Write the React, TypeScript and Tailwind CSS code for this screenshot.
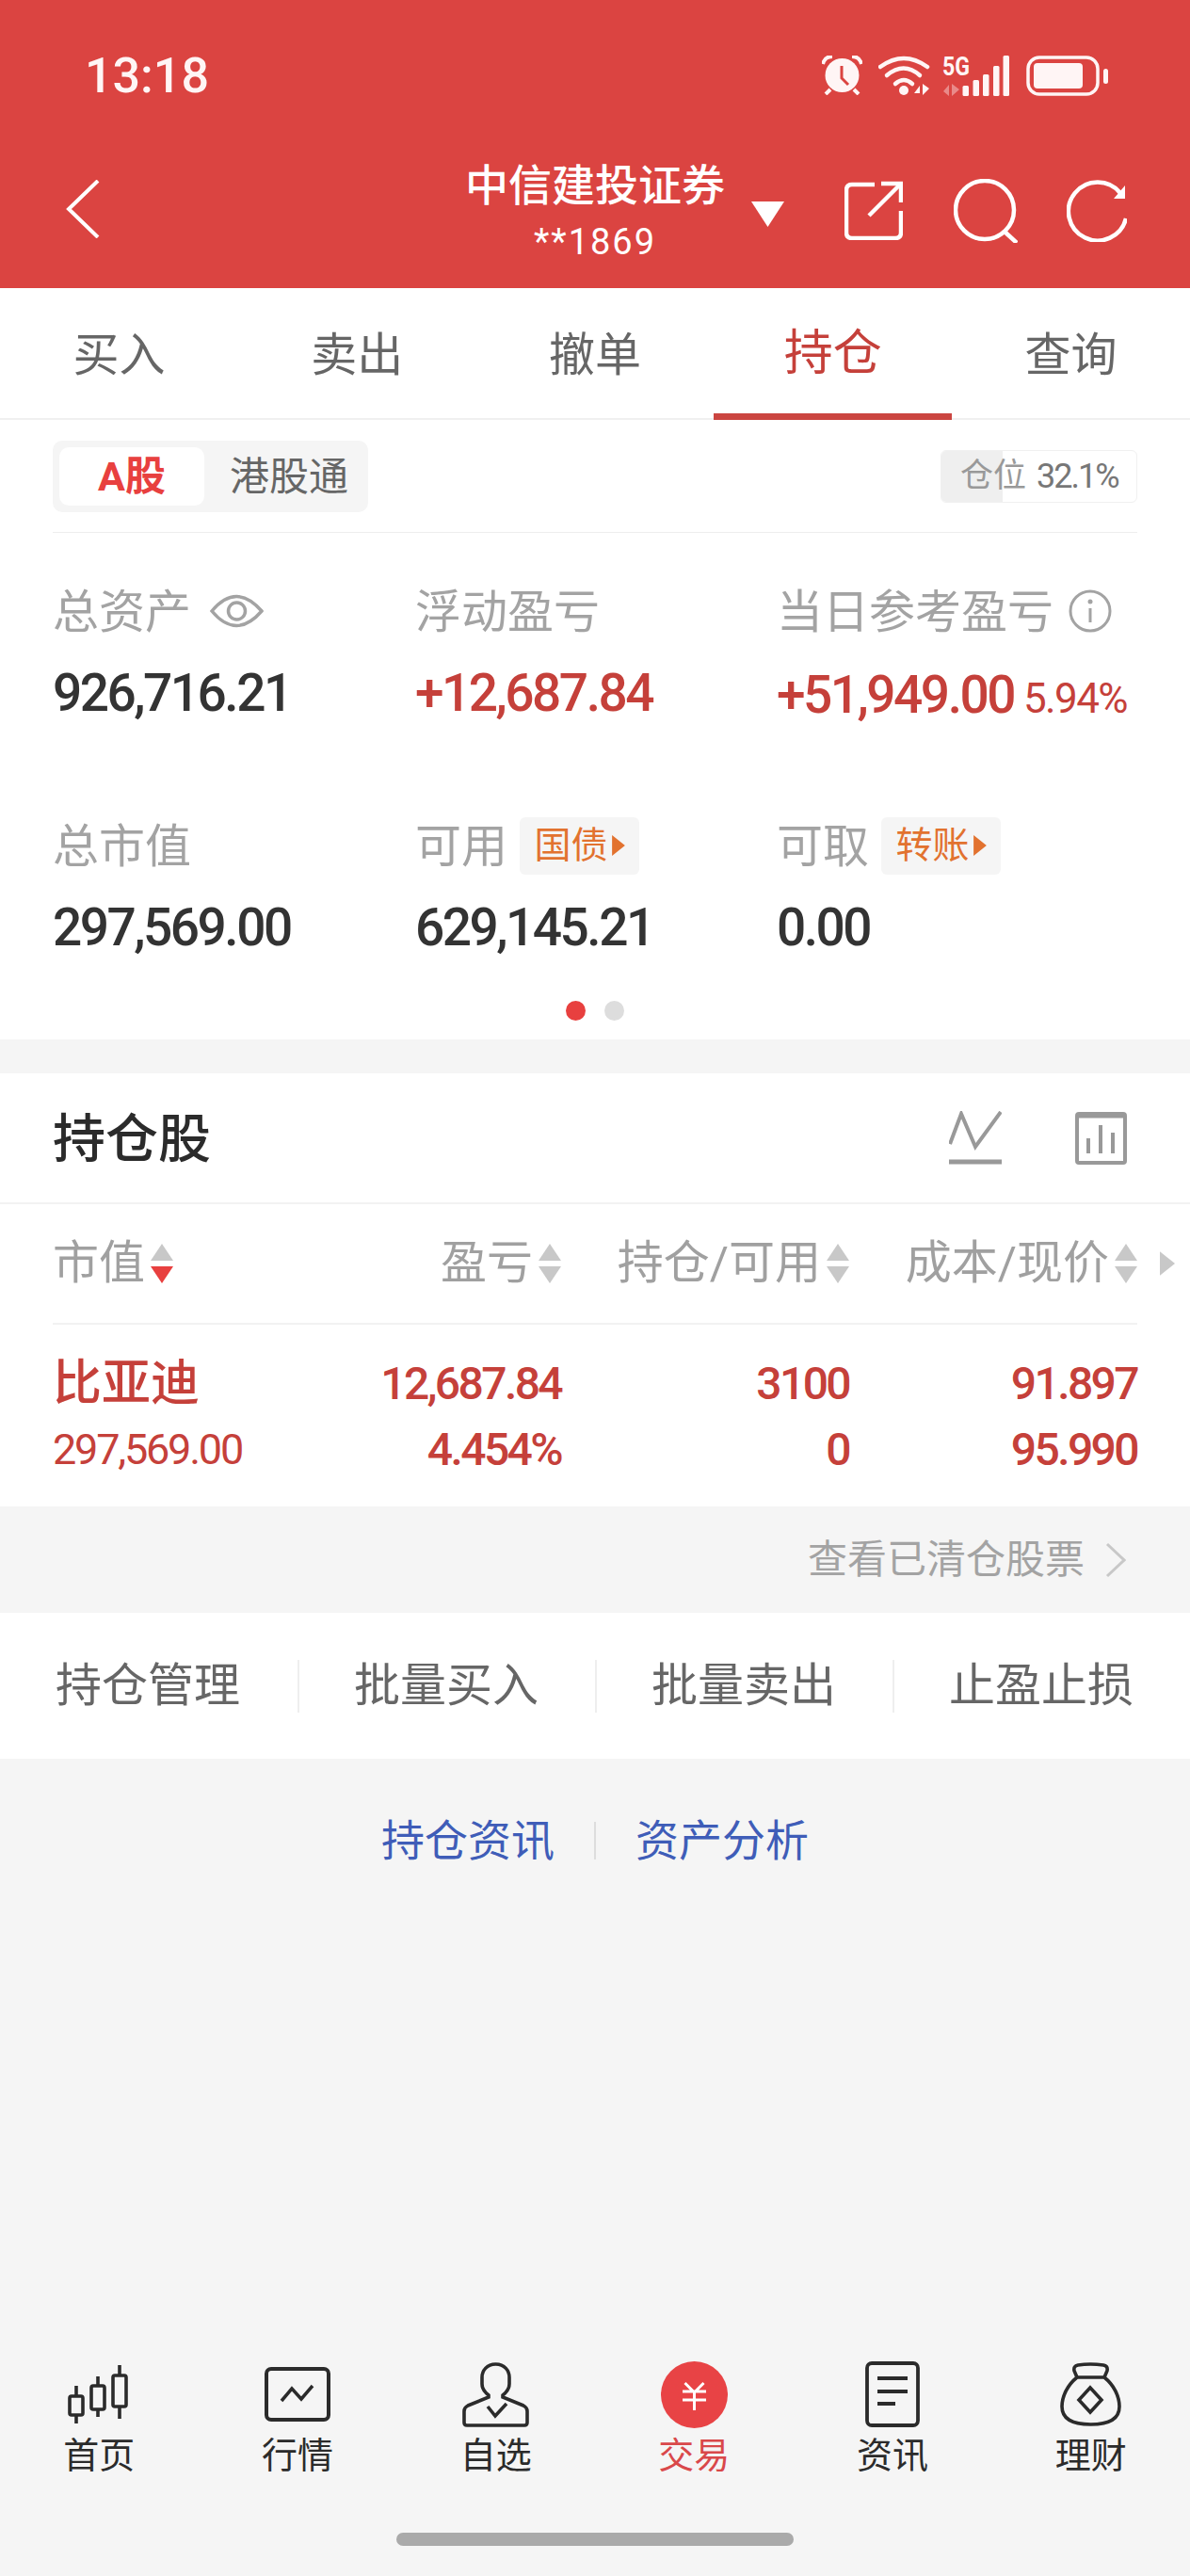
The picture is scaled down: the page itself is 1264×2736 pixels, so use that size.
import { ReactNode } from 'react'

const sans = "font-['Roboto','Noto_Sans_CJK_SC',sans-serif]"

function Caret({ className }: { className: string }) {
  return (
    <svg viewBox="0 0 10 16" className={className}>
      <path d="M0 0 L10 8 L0 16 Z" fill="currentColor" />
    </svg>
  )
}

function StatusIcons() {
  return (
    <div className="ml-auto flex items-center pr-[87px] text-white">
      {/* alarm */}
      <svg width="43" height="42" viewBox="0 0 43 42" fill="none">
        <circle cx="21.5" cy="21" r="18" fill="#fff5f5" />
        <path d="M1 9 Q3 1 11 1 M42 9 Q40 1 32 1" stroke="#fff5f5" strokeWidth="4" />
        <path d="M4 41 L9 36 M39 41 L34 36" stroke="#fff5f5" strokeWidth="4" />
        <path d="M21 11 V24 L28 31" stroke="#db4441" strokeWidth="3" />
      </svg>
      {/* wifi */}
      <svg width="55" height="43" viewBox="0 0 55 43" fill="none" className="ml-[17px]">
        <g stroke="#fff5f5" strokeWidth="4.5" strokeLinecap="round">
          <path d="M2 12 Q27 -6 52 12" />
          <path d="M9 21 Q27 6 44 21" />
          <path d="M18 30 Q27 22 36 30" />
        </g>
        <circle cx="27" cy="37" r="5" fill="#fff5f5" />
        <path d="M38 40 L44 32 V40 Z M47 30 V42 L54 35 Z" fill="#fff5f5" />
      </svg>
      {/* 5G and signal bars */}
      <svg width="71" height="43" viewBox="0 0 71 43" className="ml-[13px] overflow-visible">
        <text x="0" y="21" fontFamily="Roboto" fontWeight="700" fontSize="28" fill="#fff5f5" textLength="29" lengthAdjust="spacingAndGlyphs">5G</text>
        <path d="M1 38 L7 31 V43 Z M10 30 V43 L18 36 Z" fill="#fff5f5" opacity="0.4" />
        <g fill="#fff5f5">
          <rect x="21.5" y="32" width="6.5" height="11" rx="1.5" />
          <rect x="32.5" y="26" width="6.5" height="17" rx="1.5" />
          <rect x="43" y="20" width="6.5" height="23" rx="1.5" />
          <rect x="54" y="11" width="6.5" height="32" rx="1.5" />
          <rect x="64.5" y="0" width="6.5" height="43" rx="1.5" />
        </g>
      </svg>
      {/* battery */}
      <svg width="87" height="43" viewBox="0 0 87 43" fill="none" className="ml-[18px]">
        <rect x="2" y="2" width="74" height="39" rx="12" stroke="#fff5f5" strokeWidth="3.5" />
        <rect x="8" y="8" width="52" height="27" rx="4" fill="#fff5f5" />
        <rect x="82" y="14" width="5" height="16" rx="2.5" fill="#fff5f5" />
      </svg>
    </div>
  )
}

function TitleBar() {
  return (
    <div className="grid h-[146px] grid-cols-[1fr_auto_1fr] items-center pb-[24px]">
      <svg width="36" height="62" viewBox="0 0 36 62" fill="none" className="mt-[-3px] ml-[70px]">
        <path d="M34 1 L3 31 L34 61" stroke="#fff" strokeWidth="4" />
      </svg>
      <div className="mt-[7px] flex flex-col items-center text-white">
        <div className="h-[60px] text-[46px] leading-[60px] font-medium">中信建投证券</div>
        <div className="h-[60px] text-[38px] leading-[60px] tracking-[2px]">**1869</div>
      </div>
      <div className="flex items-center pr-[67px]">
        <svg width="35" height="27" viewBox="0 0 35 27" className="mb-[-8px] ml-[28px]">
          <path d="M0 0 H35 L17.5 27 Z" fill="#fff" />
        </svg>
        <div className="ml-auto flex items-center text-white">
          <svg width="62" height="63" viewBox="0 0 62 63" fill="none" stroke="#fff" strokeWidth="4.5">
            <path d="M32 4 H8 Q2 4 2 10 V55 Q2 61 8 61 H54 Q60 61 60 55 V32" />
            <path d="M26 37 L60 3" />
            <path d="M39 3 H60 V23" />
          </svg>
          <svg width="68" height="68" viewBox="0 0 68 68" fill="none" stroke="#fff" strokeWidth="4.5" className="ml-[54px]">
            <circle cx="33" cy="33" r="31" />
            <path d="M54 56 L67 68" />
          </svg>
          <svg width="64" height="66" viewBox="0 0 64 66" fill="none" className="ml-[52px]">
            <path d="M63 41 A31 31 0 1 1 57 14" stroke="#fff" strokeWidth="4.5" />
            <path d="M62 6 V20 H50 Z" fill="#fff" />
          </svg>
        </div>
      </div>
    </div>
  )
}

const tabs = ['买入', '卖出', '撤单', '持仓', '查询']

function Tabs() {
  return (
    <div className="grid h-[140px] grid-cols-5 border-b-2 border-[#f0f0f0] bg-white">
      {tabs.map((t) => (
        <div
          key={t}
          className={
            t === '持仓'
              ? 'mb-[-2px] flex items-center justify-center border-b-[7px] border-[#cb4540] pt-[7px] text-[52px] text-[#c5403a]'
              : 'flex items-center justify-center pt-[6px] text-[49px] text-[#666666]'
          }
        >
          {t}
        </div>
      ))}
    </div>
  )
}

function Tag({ text }: { text: string }) {
  return (
    <span className="ml-[13px] flex h-[61px] w-[127px] items-center justify-center gap-[4px] rounded-[6px] bg-[#f5f5f5] text-[39px] text-[#e2722f]">
      {text}
      <Caret className="h-[22px] w-[14px]" />
    </span>
  )
}

interface StatProps {
  label: string
  extra?: ReactNode
  value: ReactNode
  red?: boolean
}

function Stat({ label, extra, value, red }: StatProps) {
  return (
    <div>
      <div className="flex h-[60px] items-center text-[49px] text-[#a3a3a3]">
        <span className="pt-[3px]">{label}</span>
        {extra}
      </div>
      <div
        className={`mt-[22px] flex h-[70px] items-center text-[55px] font-medium tracking-[-2.5px] ${
          red ? 'text-[#c5403a]' : 'text-[#333333]'
        }`}
      >
        {value}
      </div>
    </div>
  )
}

function AssetCard() {
  return (
    <div className="bg-white px-[56px] pt-[22px] pb-[20px]">
      <div className="flex h-[76px] items-center justify-between">
        <div className="flex h-[76px] w-[335px] items-center rounded-[10px] bg-[#f5f5f5] px-[7px]">
          <div className="flex h-[62px] w-[154px] items-center justify-center rounded-[10px] bg-white text-[43px] font-bold text-[#e8403f]">
            A股
          </div>
          <div className="w-[160px] pl-[20px] text-center text-[42px] whitespace-nowrap text-[#666666]">港股通</div>
        </div>
        {/* position meter: grey fill sits behind the label */}
        <div className="relative flex h-[56px] w-[209px] items-center overflow-hidden rounded-[6px] border border-[#f0f0f0] pl-[20px] text-[35px] whitespace-nowrap">
          <div className="absolute inset-y-0 left-0 w-[65px] bg-[#efefef]" />
          <span className="relative text-[#999999]">仓位</span>
          <span className="relative ml-[11px] text-[36px] tracking-[-2px] text-[#777777]">32.1%</span>
        </div>
      </div>
      <div className="mt-[21px] h-px bg-[#eeeeee]" />
      <div className="mt-[53px] grid grid-cols-[385px_384px_1fr] gap-y-[97px]">
        <Stat
          label="总资产"
          value="926,716.21"
          extra={
            <svg width="57" height="42" viewBox="0 0 57 42" fill="none" stroke="#a3a3a3" strokeWidth="3.5" className="ml-[20px]">
              <path d="M2 21 Q28 -10 55 21 Q28 52 2 21 Z" />
              <circle cx="28.5" cy="21" r="9" />
            </svg>
          }
        />
        <Stat label="浮动盈亏" value="+12,687.84" red />
        <Stat
          label="当日参考盈亏"
          red
          value={
            <span className="mt-[5px] flex items-baseline">
              +51,949.00
              <span className="ml-[10px] text-[44px] font-normal tracking-[-1.6px]">5.94%</span>
            </span>
          }
          extra={
            <svg width="46" height="46" viewBox="0 0 46 46" fill="none" className="ml-[16px]">
              <circle cx="23" cy="23" r="21" stroke="#a3a3a3" strokeWidth="3" />
              <circle cx="23" cy="13" r="2.5" fill="#a3a3a3" />
              <path d="M23 20 V35" stroke="#a3a3a3" strokeWidth="3" />
            </svg>
          }
        />
        <Stat label="总市值" value="297,569.00" />
        <Stat label="可用" value="629,145.21" extra={<Tag text="国债" />} />
        <Stat label="可取" value="0.00" extra={<Tag text="转账" />} />
      </div>
      <div className="mt-[43px] flex justify-center gap-[20px]">
        <span className="h-[21px] w-[21px] rounded-full bg-[#e8403f]" />
        <span className="h-[21px] w-[21px] rounded-full bg-[#dddddd]" />
      </div>
    </div>
  )
}

// stacked up/down sort arrows
function SortArrows({ down }: { down?: boolean }) {
  return (
    <svg width="24" height="42" viewBox="0 0 24 42" className="ml-[6px] shrink-0">
      <path d="M12 0 L24 18 H0 Z" fill="#c8c8c8" />
      <path d="M12 42 L24 24 H0 Z" fill={down ? '#e8403f' : '#c8c8c8'} />
    </svg>
  )
}

function Holdings() {
  return (
    <div className="mt-[36px] bg-white">
      <div className="flex h-[139px] items-center border-b-2 border-[#f2f2f2] pr-[67px] pl-[56px]">
        <div className="pt-[3px] text-[56px] font-medium text-[#2b2b2b]">持仓股</div>
        <svg width="56" height="57" viewBox="0 0 56 57" fill="none" className="ml-auto">
          <path d="M1 35 L13 3 L28 38 L55 1" stroke="#999999" strokeWidth="4" />
          <path d="M0 54 H56" stroke="#999999" strokeWidth="5" />
        </svg>
        <svg width="55" height="56" viewBox="0 0 55 56" fill="none" className="ml-[78px]">
          <rect x="2" y="2" width="51" height="52" rx="2" stroke="#999999" strokeWidth="4" />
          <path d="M4 5 H51" stroke="#999999" strokeWidth="3" />
          <path d="M14 44 V28 M27 44 V14 M40 44 V22" stroke="#999999" strokeWidth="4" />
        </svg>
      </div>
      <div className="flex h-[126px] items-center pl-[56px]">
        <div className="grid w-[1152px] grid-cols-[340px_200px_306px_306px] text-[49px] text-[#a0a0a0]">
          <div className="flex items-center">
            市值
            <SortArrows down />
          </div>
          <div className="flex items-center justify-end">
            盈亏
            <SortArrows />
          </div>
          <div className="flex items-center justify-end whitespace-nowrap">
            持仓/可用
            <SortArrows />
          </div>
          <div className="flex items-center justify-end whitespace-nowrap">
            成本/现价
            <SortArrows />
          </div>
        </div>
        <Caret className="ml-[24px] h-[30px] w-[16px] text-[#c8c8c8]" />
      </div>
      <div className="mx-[56px] h-[2px] bg-[#f2f2f2]" />
      <div className="grid h-[193px] grid-cols-[340px_200px_306px_306px] px-[56px] pt-[28px] text-[48px] font-medium tracking-[-2.6px] text-[#c5403a]">
        <div>
          <div className="h-[70px] text-[52px] leading-[70px] tracking-normal">比亚迪</div>
          <div className="h-[70px] text-[45px] leading-[70px] font-normal tracking-[-2.2px]">297,569.00</div>
        </div>
        <div className="text-right leading-[70px]">
          <div>12,687.84</div>
          <div>4.454%</div>
        </div>
        <div className="text-right leading-[70px]">
          <div>3100</div>
          <div>0</div>
        </div>
        <div className="text-right leading-[70px]">
          <div>91.897</div>
          <div>95.990</div>
        </div>
      </div>
    </div>
  )
}

function ClearedLink() {
  return (
    <div className="flex h-[113px] items-center justify-end pr-[68px] text-[42px] text-[#a3a3a3]">
      查看已清仓股票
      <svg width="22" height="38" viewBox="0 0 22 38" fill="none" className="ml-[22px]">
        <path d="M2 2 L20 19 L2 36" stroke="#c8c8c8" strokeWidth="3" />
      </svg>
    </div>
  )
}

const actions = ['持仓管理', '批量买入', '批量卖出', '止盈止损']

function Actions() {
  return (
    <div className="grid h-[155px] grid-cols-4 items-center bg-white">
      {actions.map((a, i) => (
        <div
          key={a}
          className={`flex h-[56px] items-center justify-center pr-[2px] text-[49px] text-[#666666] ${
            i > 0 ? 'border-l-2 border-[#eeeeee]' : ''
          }`}
        >
          {a}
        </div>
      ))}
    </div>
  )
}

function Links() {
  return (
    <div className="mt-[57px] flex items-center justify-center text-[46px] text-[#3f5db8]">
      <span className="leading-[60px]">持仓资讯</span>
      <span className="mx-[42px] h-[40px] w-[2px] bg-[#dddddd]" />
      <span className="leading-[60px]">资产分析</span>
    </div>
  )
}

const stroke = '#2b2b2b'

const navItems: { label: string; active?: boolean; icon: ReactNode }[] = [
  {
    label: '首页',
    icon: (
      <svg width="66" height="62" viewBox="0 0 66 62" fill="none" stroke={stroke} strokeWidth="3.6">
        <rect x="2" y="33" width="14" height="20" rx="2" />
        <path d="M9 22 V33 M9 53 V62" />
        <rect x="25" y="22" width="14" height="25" rx="2" />
        <path d="M32 12 V22 M32 47 V55" />
        <rect x="48" y="11" width="14" height="33" rx="2" />
        <path d="M55 0 V11 M55 44 V57" />
      </svg>
    ),
  },
  {
    label: '行情',
    icon: (
      <svg width="70" height="58" viewBox="0 0 70 58" fill="none" stroke={stroke} strokeWidth="4">
        <rect x="2" y="2" width="66" height="54" rx="5" />
        <path d="M18 36 L29 23 L39 34 L51 20" strokeWidth="3.5" />
      </svg>
    ),
  },
  {
    label: '自选',
    icon: (
      <svg width="71" height="69" viewBox="0 0 71 69" fill="none" stroke={stroke} strokeWidth="3.6">
        <path d="M35.5 2 C26 2 21 9 21 16 V23 C21 28 23 31 28 35 V37 L6 46 Q2 48 2 52 V64 Q2 67 5 67 H66 Q69 67 69 64 V52 Q69 48 65 46 L43 37 V35 C48 31 50 28 50 23 V16 C50 9 45 2 35.5 2 Z" />
        <path d="M27 47 L35 57 L47 44" />
      </svg>
    ),
  },
  {
    label: '交易',
    active: true,
    icon: (
      <svg width="71" height="71" viewBox="0 0 71 71" fill="none">
        <circle cx="35.5" cy="35.5" r="35.5" fill="#e84345" />
        <path d="M25.5 23 L35.5 33 L45.5 23 M23 32 H48 M23 41 H48 M35.5 33 V52" stroke="#fff" strokeWidth="3" />
      </svg>
    ),
  },
  {
    label: '资讯',
    icon: (
      <svg width="58" height="70" viewBox="0 0 58 70" fill="none" stroke={stroke} strokeWidth="3.8">
        <rect x="2" y="2" width="54" height="66" rx="5" />
        <path d="M13 18 H45 M13 32 H45 M13 45 H32" />
      </svg>
    ),
  },
  {
    label: '理财',
    icon: (
      <svg width="65" height="68" viewBox="0 0 65 68" fill="none" stroke={stroke} strokeWidth="3.6">
        <path d="M18 16 L15 9 Q14 4 19 3 Q32 1 46 3 Q51 4 50 9 L47 16" />
        <path d="M18 16 H47 C57 24 63 36 63 47 C63 60 52 66 32.5 66 C13 66 2 60 2 47 C2 36 8 24 18 16 Z" />
        <path d="M32 27 L44 40 L32 53 L20 40 Z" />
      </svg>
    ),
  },
]

function BottomNav() {
  return (
    <div className="mt-auto pb-[32px]">
      <div className="grid grid-cols-6">
        {navItems.map((n) => (
          <div key={n.label} className="flex flex-col items-center">
            <div className="flex h-[72px] items-center justify-center">{n.icon}</div>
            <div
              className={`mt-[4px] h-[50px] text-[38px] leading-[50px] ${
                n.active ? 'text-[#d9484a]' : 'text-[#2b2b2b]'
              }`}
            >
              {n.label}
            </div>
          </div>
        ))}
      </div>
      <div className="mx-auto mt-[57px] h-[14px] w-[422px] rounded-full bg-[#aaaaaa]" />
    </div>
  )
}

export default function App() {
  return (
    <div className={`flex h-[2736px] w-[1264px] flex-col overflow-hidden bg-[#f5f5f5] ${sans}`}>
      <div className="h-[306px] bg-[#db4441]">
        <div className="flex h-[160px] items-center pl-[90px]">
          <div className="pt-[2px] text-[52px] font-medium text-[#fff5f5]">13:18</div>
          <StatusIcons />
        </div>
        <TitleBar />
      </div>
      <Tabs />
      <AssetCard />
      <Holdings />
      <ClearedLink />
      <Actions />
      <Links />
      <BottomNav />
    </div>
  )
}
